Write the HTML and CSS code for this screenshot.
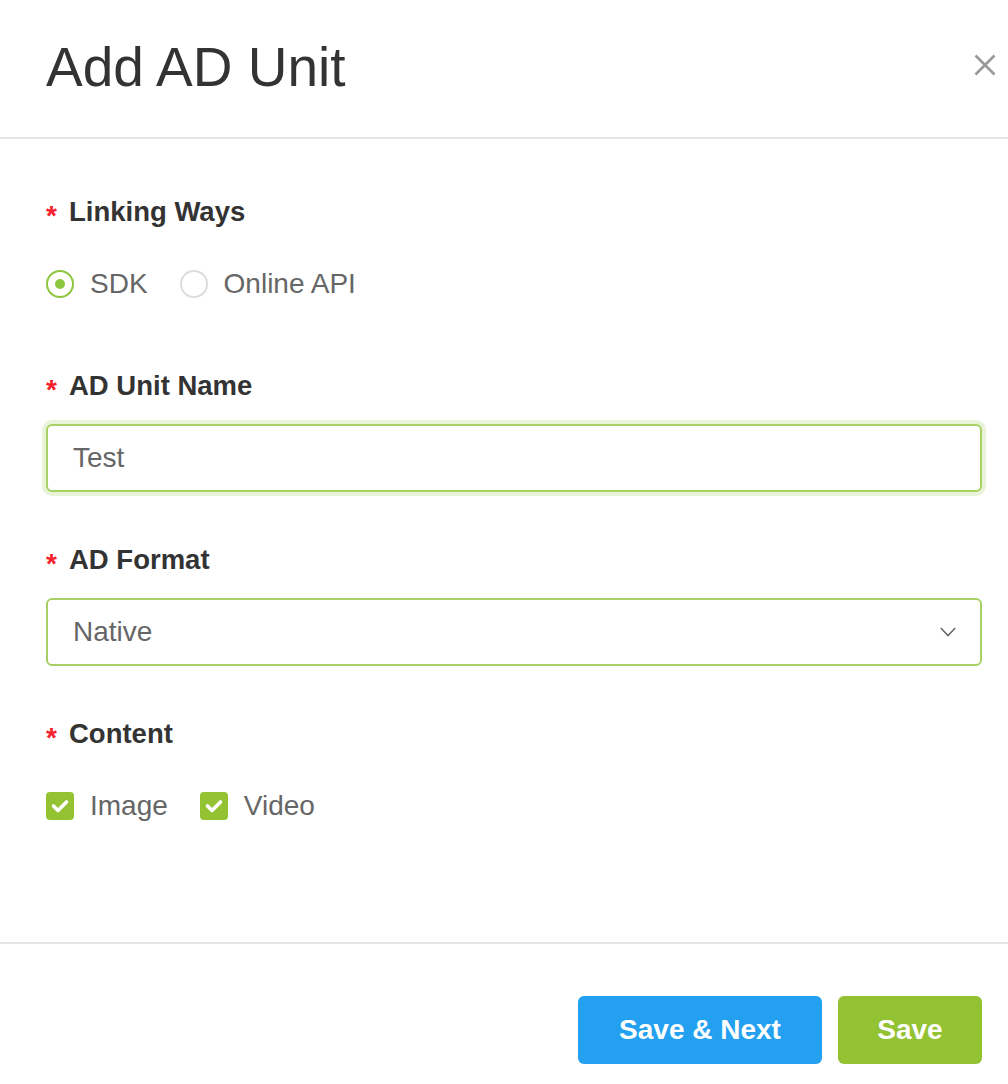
FILE: index.html
```html
<!DOCTYPE html>
<html lang="en">
<head>
<meta charset="utf-8">
<title>Add AD Unit</title>
<link rel="stylesheet" href="styles.css">
</head>
<body>
<div class="dialog">
  <header class="dialog-header">
    <h1 class="dialog-title">Add AD Unit</h1>
    <button class="close-btn" aria-label="Close">
      <svg width="22" height="22" viewBox="0 0 22 22"><path d="M1.5 1.5 L20.5 20.5 M20.5 1.5 L1.5 20.5" stroke="#999" stroke-width="2.6" fill="none"/></svg>
    </button>
  </header>

  <main class="dialog-body">
    <div class="field">
      <div class="label"><span class="req">*</span>Linking Ways</div>
      <div class="choice-row">
        <label class="choice">
          <span class="radio checked"><span class="dot"></span></span>
          <span class="choice-text">SDK</span>
        </label>
        <label class="choice">
          <span class="radio"></span>
          <span class="choice-text">Online API</span>
        </label>
      </div>
    </div>

    <div class="field">
      <div class="label"><span class="req">*</span>AD Unit Name</div>
      <div class="input focused">Test</div>
    </div>

    <div class="field">
      <div class="label"><span class="req">*</span>AD Format</div>
      <div class="input select">
        <span>Native</span>
        <svg class="chevron" width="16" height="10" viewBox="0 0 16 10"><path d="M0.8 1 L8 8.6 L15.2 1" stroke="#666" stroke-width="1.5" fill="none"/></svg>
      </div>
    </div>

    <div class="field">
      <div class="label"><span class="req">*</span>Content</div>
      <div class="choice-row">
        <label class="choice">
          <span class="checkbox"><svg width="28" height="28" viewBox="0 0 28 28"><path d="M7.5 14 L12 18.5 L20.5 10" stroke="#fff" stroke-width="3.6" fill="none" stroke-linecap="round" stroke-linejoin="round"/></svg></span>
          <span class="choice-text">Image</span>
        </label>
        <label class="choice">
          <span class="checkbox"><svg width="28" height="28" viewBox="0 0 28 28"><path d="M7.5 14 L12 18.5 L20.5 10" stroke="#fff" stroke-width="3.6" fill="none" stroke-linecap="round" stroke-linejoin="round"/></svg></span>
          <span class="choice-text">Video</span>
        </label>
      </div>
    </div>
  </main>

  <footer class="dialog-footer">
    <button class="btn btn-blue">Save &amp; Next</button>
    <button class="btn btn-green">Save</button>
  </footer>
</div>
</body>
</html>
```

FILE: styles.css
```css
* { box-sizing: border-box; }

html, body {
  margin: 0;
  padding: 0;
  background: #fff;
}

body {
  font-family: "Liberation Sans", Arial, Helvetica, sans-serif;
  color: #333;
}

.dialog {
  width: 1008px;
  display: flex;
  flex-direction: column;
}

.dialog-header {
  height: 139px;
  border-bottom: 2px solid #e6e6e6;
  display: flex;
  align-items: center;
  justify-content: space-between;
  padding: 0 12px 2px 46px;
}

.dialog-title {
  margin: 0;
  font-size: 55px;
  font-weight: normal;
  line-height: 1;
  color: #333;
}

.close-btn {
  border: 0;
  background: none;
  padding: 0;
  width: 22px;
  height: 22px;
  display: flex;
  margin-bottom: 6px;
}

.dialog-body {
  padding: 53px 26px 102px 46px;
  display: flex;
  flex-direction: column;
  gap: 48px;
}

.field {
  display: flex;
  flex-direction: column;
  gap: 18px;
}

.label {
  height: 40px;
  display: flex;
  align-items: center;
  font-size: 27.5px;
  font-weight: bold;
  color: #333;
}

.req {
  color: #f5222d;
  font-size: 28px;
  font-weight: bold;
  width: 23px;
  padding-top: 7px;
}

.choice-row {
  height: 68px;
  display: flex;
  align-items: center;
  gap: 32px;
}

.choice {
  display: flex;
  align-items: center;
  gap: 16px;
}

.choice-text {
  font-size: 28px;
  color: #666;
}

.radio {
  width: 28px;
  height: 28px;
  border-radius: 50%;
  border: 2px solid #dcdcdc;
  display: flex;
  align-items: center;
  justify-content: center;
}

.radio.checked {
  border-color: #8dc63f;
}

.dot {
  width: 10px;
  height: 10px;
  border-radius: 50%;
  background: #8dc63f;
}

.checkbox {
  width: 28px;
  height: 28px;
  border-radius: 4px;
  background: #93c233;
  display: flex;
}

.input {
  height: 68px;
  border: 2px solid #a7d163;
  border-radius: 6px;
  padding: 0 24px 0 25px;
  display: flex;
  align-items: center;
  font-size: 28px;
  color: #666;
  background: #fff;
}

.input.focused {
  box-shadow: 0 0 0 4px #e8f3d8;
}

.select {
  justify-content: space-between;
}

.chevron {
  display: block;
}

.dialog-footer {
  border-top: 2px solid #e6e6e6;
  padding: 52px 26px 20px 46px;
  display: flex;
  justify-content: flex-end;
  gap: 16px;
}

.btn {
  height: 68px;
  border: 0;
  border-radius: 6px;
  color: #fff;
  font-family: "Liberation Sans", Arial, Helvetica, sans-serif;
  font-size: 28px;
  font-weight: bold;
}

.btn-blue {
  width: 244px;
  background: #23a0f0;
}

.btn-green {
  width: 144px;
  background: #93c233;
}
```
